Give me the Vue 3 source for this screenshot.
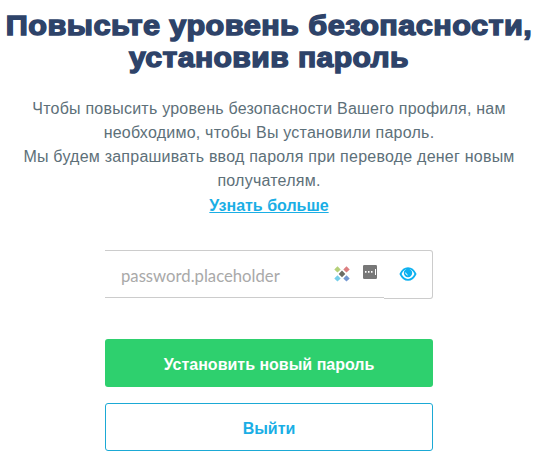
<script setup>
import { ref } from 'vue'

const password = ref('')
const visible = ref(false)
</script>

<template>
  <main class="page">
    <h1 class="title">
      <span class="title-line title-first">Повысьте уровень безопасности,</span>
      <span class="title-line title-second">установив пароль</span>
    </h1>

    <p class="lead">
      Чтобы повысить уровень безопасности Вашего профиля, нам<br />
      необходимо, чтобы Вы установили пароль.<br />
      Мы будем запрашивать ввод пароля при переводе денег новым<br />
      получателям.
    </p>
    <a class="more" href="#">Узнать больше</a>

    <form class="form" @submit.prevent>
      <div class="field">
        <div class="field-main">
          <input
            v-model="password"
            class="input"
            :type="visible ? 'text' : 'password'"
            placeholder="password.placeholder"
          />
          <!-- password manager marks -->
          <svg class="mark-x" width="18" height="18" viewBox="0 0 18 18" aria-hidden="true">
            <path d="M4.5 1.2 7.7 4.4 4.5 7.6 1.3 4.4z" fill="#b5d078" />
            <path d="M13.5 1.2 16.7 4.4 13.5 7.6 10.3 4.4z" fill="#dc7e80" />
            <path d="M9 5.6 12.3 8.9 9 12.2 5.7 8.9z" fill="#6c6c64" />
            <path d="M4.5 10.2 7.7 13.4 4.5 16.6 1.3 13.4z" fill="#76cfea" />
            <path d="M13.5 10.2 16.7 13.4 13.5 16.6 10.3 13.4z" fill="#7598d2" />
          </svg>
          <svg class="mark-dots" width="14" height="14" viewBox="0 0 14 14" aria-hidden="true">
            <rect width="14" height="14" rx="1.3" fill="#777" />
            <path d="M2 6h1.5v1.8h-1.5zM5 6h1.5v1.8h-1.5zM8 6h1.5v1.8h-1.5zM12 4h1v6h-1z" fill="#fff" />
          </svg>
        </div>
        <button class="toggle" type="button" aria-label="Показать пароль" @click="visible = !visible">
          <svg width="18" height="16" viewBox="0 0 18 16">
            <path
              d="M1.5 8C3.3 4.1 5.9 2.1 9 2.1S14.7 4.1 16.5 8C14.7 11.9 12.1 13.9 9 13.9S3.3 11.9 1.5 8z"
              fill="#fff"
              stroke="#0db1f0"
              stroke-width="1.8"
            />
            <circle cx="9" cy="7" r="4.2" fill="#0db1f0" />
            <path d="M6.6 6.6A2.8 2.8 0 0 0 8.6 9" fill="none" stroke="#fff" stroke-width="1" />
          </svg>
        </button>
      </div>

      <button class="btn btn-primary" type="submit">Установить новый пароль</button>
      <button class="btn btn-outline" type="button">Выйти</button>
    </form>
  </main>
</template>

<style>
body {
  margin: 0;
  background: #fff;
}
</style>

<style scoped>
.page {
  box-sizing: border-box;
  width: 538px;
  height: 474px;
  padding-top: 10px;
  overflow: hidden;
  font-family: "Liberation Sans", Arial, sans-serif;
  text-align: center;
}

/* bold face widened and thickened to a black weight */
.title {
  margin: 0;
  font-size: 28px;
  font-weight: 700;
  line-height: 32px;
  letter-spacing: 0.4px;
  color: #2e4369;
  -webkit-text-stroke: 1.4px #2e4369;
}
.title-line {
  display: block;
  white-space: nowrap;
}
.title-first {
  transform: scaleX(1.095);
}
.title-second {
  transform: scaleX(1.075);
}

.lead {
  margin: 23px 0 0;
  font-size: 16px;
  line-height: 24px;
  letter-spacing: 0.23px;
  white-space: nowrap;
  color: #5d7079;
}
.more {
  display: block;
  margin-top: 1px;
  font-size: 16px;
  line-height: 24px;
  font-weight: 700;
  color: #1aaee5;
  text-decoration: underline;
}

.form {
  width: 328px;
  margin: 32px 0 0 105px;
}

/* the field has no left edge, the toggle closes it on the right */
.field {
  display: flex;
  height: 49px;
}
.field-main {
  box-sizing: border-box;
  display: flex;
  flex: 1;
  height: 48px;
  padding-left: 16px;
  border: solid #ccc;
  border-width: 1px 0;
}
.input {
  width: 212px;
  padding: 4px 0 0;
  border: 0;
  outline: 0;
  background: none;
  font-family: Lato, sans-serif;
  font-size: 16.7px;
  color: #5d7079;
}
.input::placeholder {
  color: #a9a9a9;
  opacity: 1;
}
.mark-x {
  margin-top: 14px;
}
.mark-dots {
  margin: 14px 0 0 12px;
}
.toggle {
  box-sizing: border-box;
  display: flex;
  align-items: center;
  justify-content: center;
  width: 49px;
  padding: 0 0 2px;
  border: 1px solid #ccc;
  border-left: 0;
  border-radius: 0 3px 3px 0;
  background: #fff;
}

.btn {
  box-sizing: border-box;
  display: block;
  width: 100%;
  height: 48px;
  padding: 3px 0 0;
  border-radius: 3px;
  font-family: inherit;
  font-size: 16px;
  font-weight: 700;
}
.btn-primary {
  margin-top: 40px;
  border: 0;
  background: #2ed06e;
  color: #fff;
}
.btn-outline {
  margin-top: 16px;
  border: 1px solid #1ba9d5;
  background: #fff;
  color: #1aaee5;
}
</style>
